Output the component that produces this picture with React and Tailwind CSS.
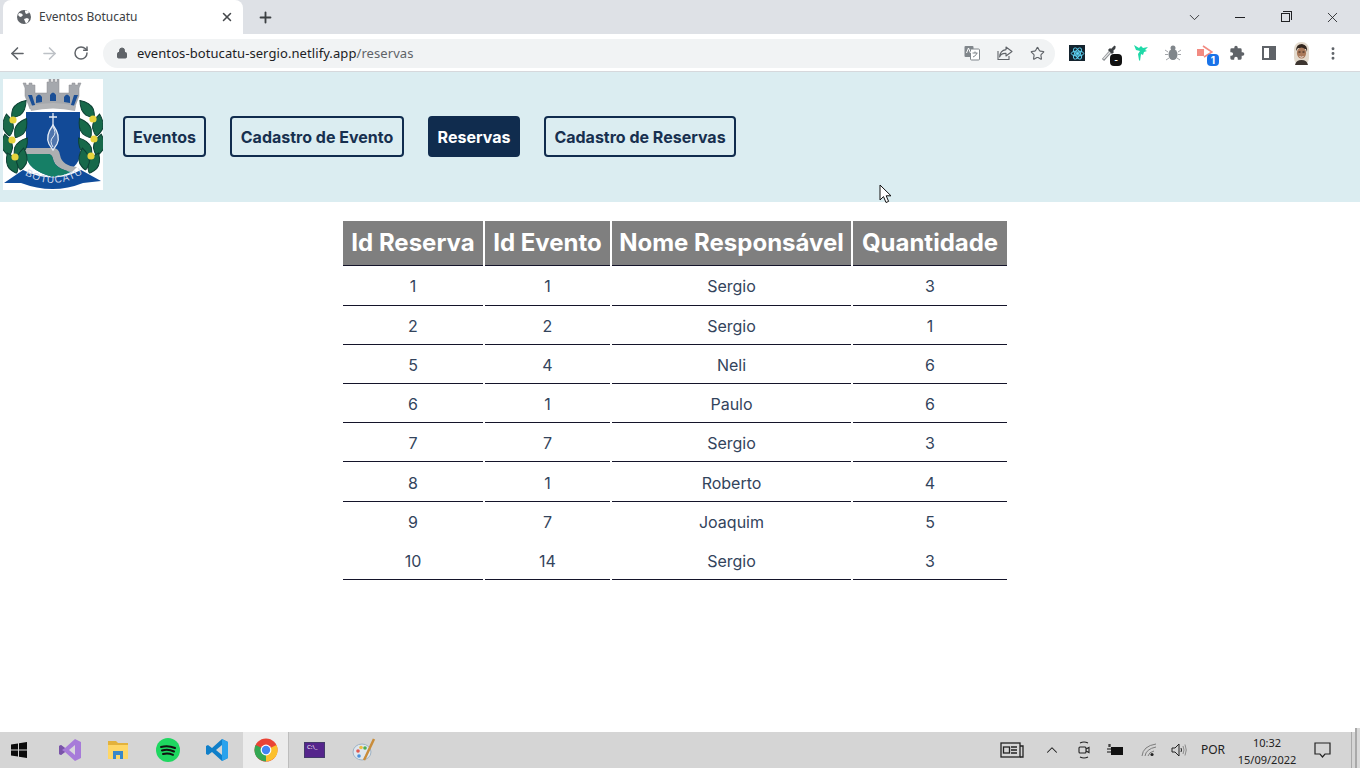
import React from "react";
import { ArrowLeft, ArrowRight, RotateCw, Lock, Star, X, Plus, ChevronDown, EllipsisVertical, ChevronUp } from "lucide-react";

const rows = [
  ["1", "1", "Sergio", "3", true, "h-[40px]"],
  ["2", "2", "Sergio", "1", true, "h-[39px]"],
  ["5", "4", "Neli", "6", true, "h-[39px]"],
  ["6", "1", "Paulo", "6", true, "h-[39px]"],
  ["7", "7", "Sergio", "3", true, "h-[39px]"],
  ["8", "1", "Roberto", "4", true, "h-[40px]"],
  ["9", "7", "Joaquim", "5", false, "h-[39px]"],
  ["10", "14", "Sergio", "3", true, "h-[39px]"],
];

function Crest() {
  const leaf = (x, y, r, k) => (
    <path key={k} d="M0 -11 Q6.5 -3 4.8 4 Q2 10 0 11 Q-2 10 -4.8 4 Q-6.5 -3 0 -11Z" transform={`translate(${x} ${y}) rotate(${r})`} fill="#17694a" stroke="#0c4034" strokeWidth="1" />
  );
  const leftLeaves = [[16, 30, 40], [5, 46, -8], [18, 49, 30], [4, 66, -12], [18, 68, 35], [9, 84, -25], [19, 80, 8]];
  const lb = [[10, 41], [9, 61], [12, 78]];
  const rb = [[90, 40], [91, 60], [88, 77]];
  return (
    <svg width="100" height="111" viewBox="0 0 100 111" className="shrink-0 bg-white">
      <path d="M20 4 h3 v2 h3 v-2 h3 v2 h3 v8 h12 v-11 h2 v-3 h2 v3 h2 v-3 h2 v3 h2 v-3 h2 v14 h10 v-8 h3 v-2 h3 v2 h3 v-2 h3 l-2 5 v8 l-5 13 Q50 22 27 30 l-5 -13 v-8z" fill="#a5a8ad" stroke="#8c8f93" strokeWidth=".5" />
      <path d="M33 24 v-6 q3 -5 6 0 v5z M47 22 v-6 q3 -5 6 0 v6z M61 23 v-5 q3 -5 6 0 v6z" fill="#1b4f96" />
      <path d="M25 16 l5 13 h3 l-4 -13z M75 16 l-5 13 h-3 l4 -13z" fill="#1b4f96" />
      <path d="M27 27 Q50 21 73 27 L72 32 Q50 27 28 32Z" fill="#b4b5b7" />
      <path d="M23 33 H77 V74 Q77 91 50 98 Q23 91 23 74Z" fill="#124a97" />
      <path d="M23 69 H50 Q56 69 57 76 Q59 87 74 88 L69 93 Q52 90 50 80 Q49 75 45 75 H23Z" fill="#adafb1" />
      <path d="M23 75 H45 Q49 75 50 80 Q52 90 69 93 Q60 97 50 98 Q23 91 23 75Z" fill="#167f66" />
      <path d="M50 34 v12 M46 38 h8" stroke="#e8edf4" strokeWidth="1.3" />
      <path d="M50 46 q-8 11 -4 19 l4 6 l4 -6 q4 -8 -4 -19z" fill="#4f75ad" stroke="#e6edf6" strokeWidth="1.3" />
      <path d="M50 48 q4 6 0 10 q-4 4 0 10" fill="none" stroke="#e6edf6" strokeWidth="1" />
      {leftLeaves.map(([x, y, r], i) => leaf(x, y, r, "l" + i))}
      {leftLeaves.map(([x, y, r], i) => leaf(100 - x, y, -r, "r" + i))}
      {lb.map(([x, y], i) => <circle key={i} cx={x} cy={y} r="3.6" fill="#e6d33d" />)}
      {rb.map(([x, y], i) => <circle key={i} cx={x} cy={y} r="3.6" fill="#e6d33d" />)}
      <path d="M1 104 L20 91 Q50 106 78 91 L98 102 L80 104 Q50 116 18 104Z" fill="#0f4c9b" />
      <path id="ribtxt" d="M20 95 Q50 113 79 95" fill="none" />
      <text fontSize="10" fill="#cfd9ea" fontFamily="Liberation Sans, sans-serif" letterSpacing="1">
        <textPath href="#ribtxt" startOffset="2">BOTUCATU</textPath>
      </text>
    </svg>
  );
}

function NavBtn({ children, active, className = "" }) {
  return (
    <button className={`h-[41px] rounded border-2 border-[#102c4e] text-base font-bold text-center whitespace-nowrap ${active ? "bg-[#102c4e] text-white" : "text-[#17304f]"} ${className}`}>
      {children}
    </button>
  );
}

function Globe() {
  return (
    <svg width="16" height="16" viewBox="0 0 16 16">
      <circle cx="8" cy="8" r="7" fill="#5f6368" />
      <path d="M3 4 q3 0 4 2 q-1 2 -3 2 l-2 -2z M9 1.5 l3 .5 l1 2 l-3 1 l-1 -2z M8 10 l3 -1 l2 1 l-1 3 l-2 1.5 l-1 -2z" fill="#fff" />
    </svg>
  );
}

function Toolbar() {
  return (
    <div className="h-[38px] pt-[1px] bg-white border-b border-[#d6d8dc] flex items-center shrink-0">
      <div className="w-[34px] flex justify-center"><ArrowLeft size={19} strokeWidth={2} className="text-[#5f6368]" /></div>
      <div className="w-[30px] flex justify-center"><ArrowRight size={19} strokeWidth={2} className="text-[#bdc1c6]" /></div>
      <div className="w-[34px] flex justify-center"><RotateCw size={16} strokeWidth={2.2} className="text-[#5f6368]" /></div>
      <div className="ml-[5px] w-[952px] h-[29px] rounded-full bg-[#f1f3f4] flex items-center pl-[13px] pr-[10px] shrink-0">
        <Lock size={12} fill="#5f6368" className="text-[#5f6368]" />
        <div className="ml-[9px] pt-[1px] text-[13px] whitespace-nowrap text-[#202124] font-['Noto_Sans',sans-serif] tracking-[0.08px]">
          eventos-botucatu-sergio.netlify.app<span className="text-[#5f6368]">/reservas</span>
        </div>
        <div className="ml-auto flex items-center gap-[17px]">
          <svg width="16" height="16" viewBox="0 0 16 16"><rect x="0.5" y="1" width="9" height="11" rx="1" fill="#80868b" /><rect x="6.5" y="4" width="9" height="11" rx="1" fill="#fff" stroke="#80868b" /><path d="M8.5 8 h5 M11 6.5 v1.5 M9 12 q3 -1 4 -4" stroke="#80868b" fill="none" /><path d="M2.5 8 l2 -5 l2 5" stroke="#fff" fill="none" /></svg>
          <svg width="16" height="16" viewBox="0 0 16 16" fill="none" stroke="#5f6368" strokeWidth="1.1"><path d="M1 6 V14.5 H12 V11" /><path d="M9 2 L15 6.5 L9 11 V8.4 Q4 8 2.6 12 Q3 5.4 9 4.6Z" strokeLinejoin="round" /></svg>
          <Star size={15} strokeWidth={1.8} className="text-[#5f6368]" />
        </div>
      </div>
      <div className="ml-[14px] relative w-4 h-4 bg-[#14232e] flex items-center justify-center">
        <svg width="15" height="15" viewBox="0 0 24 24" fill="none" stroke="#61dafb" strokeWidth="1.5"><ellipse cx="12" cy="12" rx="10" ry="4" /><ellipse cx="12" cy="12" rx="10" ry="4" transform="rotate(60 12 12)" /><ellipse cx="12" cy="12" rx="10" ry="4" transform="rotate(120 12 12)" /><circle cx="12" cy="12" r="2" fill="#61dafb" /></svg>
      </div>
      <div className="ml-[16px] relative w-4 h-4">
        <svg width="16" height="16" viewBox="0 0 16 16"><path d="M2 15 L9 7" stroke="#8a8d91" strokeWidth="3" /><path d="M2.5 14 L9 7" stroke="#e4e5e6" strokeWidth="1.2" /><path d="M8 4 L12 8 M10.5 5.5 l3 -3 l.5 .5" stroke="#3c4043" strokeWidth="3" /></svg>
        <div className="absolute left-[9px] top-[9px] w-3 h-3 rounded-sm bg-[#111] flex items-center justify-center text-white text-[8px] leading-none font-bold">-</div>
      </div>
      <div className="ml-[16px] w-4 h-4">
        <svg width="16" height="18" viewBox="0 0 16 18"><path d="M1 0 L6 3 L8 1 L10 3 L15 2 L12 5 L14 6 L11 7 L10 10 L8 9 L7 16 L6 15 L5 9 L7 6 L3 5 Z" fill="#1fd9a8" /></svg>
      </div>
      <div className="ml-[16px] w-4 h-4">
        <svg width="16" height="16" viewBox="0 0 16 16"><ellipse cx="8" cy="9.5" rx="4.5" ry="5.5" fill="#80868b" /><circle cx="8" cy="3" r="2.5" fill="#80868b" /><path d="M0 5 l3 2 M16 5 l-3 2 M0 9.5 h3 M16 9.5 h-3 M1 15 l3 -2 M15 15 l-3 -2" stroke="#a3a6aa" /></svg>
      </div>
      <div className="ml-[16px] relative w-4 h-4">
        <svg width="16" height="16" viewBox="0 0 16 16"><rect x="0" y="4" width="7" height="7" fill="#f28b82" /><path d="M6 1 L15 7 L7 12" fill="none" stroke="#f28b82" strokeWidth="1.6" /></svg>
        <div className="absolute left-[10px] top-[9px] w-3 h-3 rounded-sm bg-[#1a73e8] flex items-center justify-center text-white text-[10px] leading-none font-bold">1</div>
      </div>
      <div className="ml-[16px] w-4 h-4">
        <svg width="16" height="16" viewBox="0 0 24 24" fill="#5f6368"><path d="M20.5 11H19V7a2 2 0 0 0-2-2h-4V3.5a2.5 2.5 0 0 0-5 0V5H4a2 2 0 0 0-2 2v3.8h1.5a2.7 2.7 0 0 1 0 5.4H2V20a2 2 0 0 0 2 2h3.8v-1.5a2.7 2.7 0 0 1 5.4 0V22H17a2 2 0 0 0 2-2v-4h1.5a2.5 2.5 0 0 0 0-5z" /></svg>
      </div>
      <div className="ml-[16px] w-4 h-4 flex items-center justify-center">
        <div className="w-[14px] h-[14px] border-2 border-[#5f6368] flex justify-end"><div className="w-[5px] h-full bg-[#5f6368]" /></div>
      </div>
      <div className="ml-[16px] w-4 flex justify-center">
        <svg width="15" height="23" viewBox="0 0 15 23">
          <rect width="15" height="23" rx="7" fill="#e3dacd" />
          <path d="M2 9 Q2 2 8 2 Q14 3 13 10 L12 7 Q7 7 4 6Z" fill="#32261e" />
          <ellipse cx="7.5" cy="11" rx="4.6" ry="5.6" fill="#a9795a" />
          <path d="M4.5 10 h2 M8.5 10 h2" stroke="#2c201a" strokeWidth="1" />
          <path d="M5.5 14.5 q2 1.5 4 0" stroke="#fff" strokeWidth=".8" fill="none" />
          <path d="M1 23 Q2 18 7.5 18 Q13 18 14 23Z" fill="#3d3530" />
        </svg>
      </div>
      <div className="ml-[16px] w-4 flex justify-center"><EllipsisVertical size={17} strokeWidth={2.4} className="text-[#5f6368]" /></div>
    </div>
  );
}

function Tabs() {
  return (
    <div className="h-[34px] bg-[#dee1e6] flex items-stretch shrink-0 font-['Noto_Sans',sans-serif]">
      <div className="ml-[3px] w-[240px] bg-white rounded-t-lg flex items-center pl-[13px] pr-[9px]">
        <Globe />
        <span className="ml-[7px] text-[12px] text-[#3c4043] whitespace-nowrap">Eventos Botucatu</span>
        <X size={14} strokeWidth={2.6} className="ml-auto text-[#45484c]" />
      </div>
      <div className="ml-[14px] flex items-center"><Plus size={17} strokeWidth={2.6} className="text-[#3c4043]" /></div>
      <div className="ml-auto pr-[5px] flex items-center text-[#202124]">
        <div className="w-[46px] flex justify-center"><ChevronDown size={17} strokeWidth={1.2} /></div>
        <div className="w-[46px] flex justify-center"><div className="w-[10px] h-[1px] bg-[#202124]" /></div>
        <div className="w-[46px] flex justify-center">
          <div className="relative w-[9px] h-[9px] border border-[#202124] mt-[1px] mr-[1px]"><div className="absolute left-[1px] -top-[3px] w-[9px] h-[9px] border-t border-r border-[#202124]" /></div>
        </div>
        <div className="w-[46px] flex justify-center"><X size={17} strokeWidth={1.2} /></div>
      </div>
    </div>
  );
}

function Taskbar() {
  return (
    <div className="h-[36px] bg-[#d5d5d5] flex items-center shrink-0 font-['Noto_Sans',sans-serif]">
      <div className="w-[46px] flex pl-[11px]">
        <svg width="16" height="16" viewBox="0 0 16 16" fill="#0b0b0b"><path d="M0 2.5 L7 1.5 V7.5 H0z M8 1.3 L16 0 V7.5 H8z M0 8.5 H7 V14.5 L0 13.5z M8 8.5 H16 V16 L8 14.7z" /></svg>
      </div>
      <div className="w-[47px] flex justify-center">
        <svg width="24" height="24" viewBox="0 0 24 24"><path d="M17 1 L23 4 V20 L17 23 L7 14 L3 17 L1 16 V8 L3 7 L7 10z" fill="#a77bd9" /><path d="M17 7 L11 12 L17 17z" fill="#d8d5dc" /><path d="M1 8 L3 7 L7 10 L4 12 L7 14 L3 17 L1 16z" fill="#7a54a8" /></svg>
      </div>
      <div className="w-[50px] flex justify-center">
        <svg width="24" height="24" viewBox="0 0 24 24"><path d="M2 3 h8 l2 2 h10 v5 H2z" fill="#e3b23c" /><path d="M2 7 h20 v14 H2z" fill="#ffd766" /><path d="M7 13 h10 v8 h-3 v-4 h-4 v4 h-3z" fill="#3a87c8" /></svg>
      </div>
      <div className="w-[50px] flex justify-center">
        <svg width="24" height="24" viewBox="0 0 24 24"><circle cx="12" cy="12" r="12" fill="#1ed760" /><path d="M5 9 q7 -2 14 1 M6 12.5 q6 -2 12 1 M7 16 q5 -1.5 10 .8" fill="none" stroke="#111" strokeWidth="2" strokeLinecap="round" /></svg>
      </div>
      <div className="w-[48px] flex justify-center">
        <svg width="24" height="24" viewBox="0 0 24 24"><path d="M17 1 L23 4 V20 L17 23 L7 14 L3 17 L1 16 V8 L3 7 L7 10z" fill="#0f7fc9" /><path d="M17 1 L23 4 V20 L17 23z" fill="#2aa2ec" /><path d="M17 7 L11 12 L17 17z" fill="#d5d5d5" /></svg>
      </div>
      <div className="w-[46px] ml-[2px] h-full bg-[#ececec] border-r border-[#bdbdbd] flex justify-center items-center">
        <svg width="24" height="24" viewBox="0 0 24 24">
          <circle cx="12" cy="12" r="11.5" fill="#ea4335" />
          <path d="M12 12 L22.5 7 A11.5 11.5 0 0 1 12 23.5z" fill="#fbc02d" />
          <path d="M12 12 L12 23.5 A11.5 11.5 0 0 1 1.6 7z" fill="#34a853" />
          <circle cx="12" cy="12" r="5.4" fill="#fff" /><circle cx="12" cy="12" r="4.2" fill="#4285f4" />
        </svg>
      </div>
      <div className="w-[51px] flex justify-center">
        <div className="w-[21px] h-[16px] bg-[#55258c] border border-[#443a6b] text-[6px] leading-[9px] text-white pl-[2px]">C:\_</div>
      </div>
      <div className="w-[48px] flex justify-center">
        <svg width="24" height="24" viewBox="0 0 24 24"><ellipse cx="10" cy="14" rx="9" ry="8" fill="#dfe7ee" stroke="#9fb3c4" /><circle cx="6" cy="13" r="1.8" fill="#e0584f" /><circle cx="9" cy="9.5" r="1.8" fill="#eebc42" /><circle cx="13" cy="10" r="1.8" fill="#4caf50" /><circle cx="7" cy="18" r="1.8" fill="#4a90d9" /><path d="M22 1 L14 18 L12 22" stroke="#c98d3b" strokeWidth="2.5" fill="none" /></svg>
      </div>

      <div className="ml-auto flex items-center text-[#1b1b1b]">
        <svg width="24" height="16" viewBox="0 0 24 16" fill="none" stroke="#222" strokeWidth="1.3"><rect x="1" y="1" width="19" height="14" /><rect x="3.5" y="5" width="6" height="6" /><path d="M11 5 h6 M11 8 h6 M11 11 h6 M20 4 h3 v11 h-3" /></svg>
        <ChevronUp size={18} strokeWidth={1.4} className="ml-[19px]" />
        <svg width="14" height="18" viewBox="0 0 14 18" fill="none" stroke="#222" strokeWidth="1.1" className="ml-[16px]"><path d="M3 2 q4 -2 8 0 M3 16 q4 2 8 0" /><rect x="2" y="6" width="7" height="6" rx="1" /><path d="M9 8 l3 -1.5 v5 l-3 -1.5" /></svg>
        <svg width="16" height="12" viewBox="0 0 16 12" className="ml-[16px]"><rect x="4" y="3" width="12" height="8" fill="#111" /><path d="M0 5 h4 M0 8 h4" stroke="#111" /><path d="M2 0 v3 M3 0 v3" stroke="#111" /></svg>
        <svg width="16" height="14" viewBox="0 0 16 14" fill="none" stroke="#7c7c7c" strokeWidth="1" className="ml-[18px]"><path d="M1 13 Q2 3 15 1 M4 13 Q5 6 15 4 M7 13 Q8 9 13 8" /><circle cx="11" cy="11.5" r="1.6" fill="#222" stroke="none" /></svg>
        <svg width="16" height="14" viewBox="0 0 16 14" fill="none" stroke="#222" strokeWidth="1" className="ml-[14px]"><path d="M1 5 h3 l4 -4 v12 l-4 -4 h-3z" /><path d="M10 5 q1 2 0 4" /><path d="M12 3 q2 4 0 8 M14 1.5 q2.5 5.5 0 11" stroke="#8a8a8a" /></svg>
        <span className="ml-[14px] text-[12px] text-[#222]">POR</span>
        <div className="ml-[12px] mt-[2px] w-[60px] flex flex-col items-center text-[11px] leading-[17px] text-[#222]">
          <span>10:32</span>
          <span className="whitespace-nowrap">15/09/2022</span>
        </div>
        <svg width="17" height="16" viewBox="0 0 17 16" fill="none" stroke="#222" strokeWidth="1.2" className="ml-[17px]"><path d="M1 1 H16 V12 H11 L8.5 15 L6 12 H1Z" /></svg>
        <div className="ml-[20px] w-[9px] h-[36px] border-l border-[#a9a9a9]" />
      </div>
    </div>
  );
}

export default function App() {
  return (
    <div className="w-[1360px] h-[768px] overflow-hidden flex flex-col bg-white relative font-['Inter',sans-serif]">
      <Tabs />
      <Toolbar />
      <header className="h-[130px] bg-[#dbedf1] flex items-start pl-[3px] pt-[7px] shrink-0">
        <Crest />
        <nav className="ml-[20px] mt-[37px] flex gap-6">
          <NavBtn className="w-[83px]">Eventos</NavBtn>
          <NavBtn className="w-[174px]">Cadastro de Evento</NavBtn>
          <NavBtn active className="w-[92px]">Reservas</NavBtn>
          <NavBtn className="w-[192px]">Cadastro de Reservas</NavBtn>
        </nav>
      </header>
      <main className="flex-1 pt-[19px] pr-[10px] flex justify-center">
        <table className="border-separate border-spacing-x-[2px] border-spacing-y-0 table-fixed w-[668px] h-fit text-[#33445c]">
          <colgroup>
            <col className="w-[140px]" /><col className="w-[125px]" /><col className="w-[239px]" /><col className="w-[154px]" />
          </colgroup>
          <thead>
            <tr className="h-[45px]">
              {["Id Reserva", "Id Evento", "Nome Responsável", "Quantidade"].map((h) => (
                <th key={h} className="bg-[#7f7f7f] border-b border-[#14142a] text-white text-2xl font-bold text-center p-0 whitespace-nowrap">{h}</th>
              ))}
            </tr>
          </thead>
          <tbody>
            {rows.map((r, i) => (
              <tr key={i} className={r[5]}>
                {r.slice(0, 4).map((c, j) => (
                  <td key={j} className={`text-center text-base p-0 border-b ${i === 0 ? "pt-0" : "pt-[2px]"} ${r[4] ? "border-[#14142a]" : "border-transparent"}`}>{c}</td>
                ))}
              </tr>
            ))}
          </tbody>
        </table>
      </main>
      <Taskbar />
      <div className="absolute left-[1355px] top-[728px] w-[5px] h-[40px] bg-[#d9d9d9] border-l-2 border-[#a9a9a9]" />
      <svg width="13" height="21" viewBox="0 0 13 21" className="absolute left-[879px] top-[184px]">
        <path d="M1 1 V16 L4.5 12.6 L7 18.5 L9.6 17.4 L7.2 11.8 H12Z" fill="#fff" stroke="#111" strokeWidth="1" />
      </svg>
    </div>
  );
}
